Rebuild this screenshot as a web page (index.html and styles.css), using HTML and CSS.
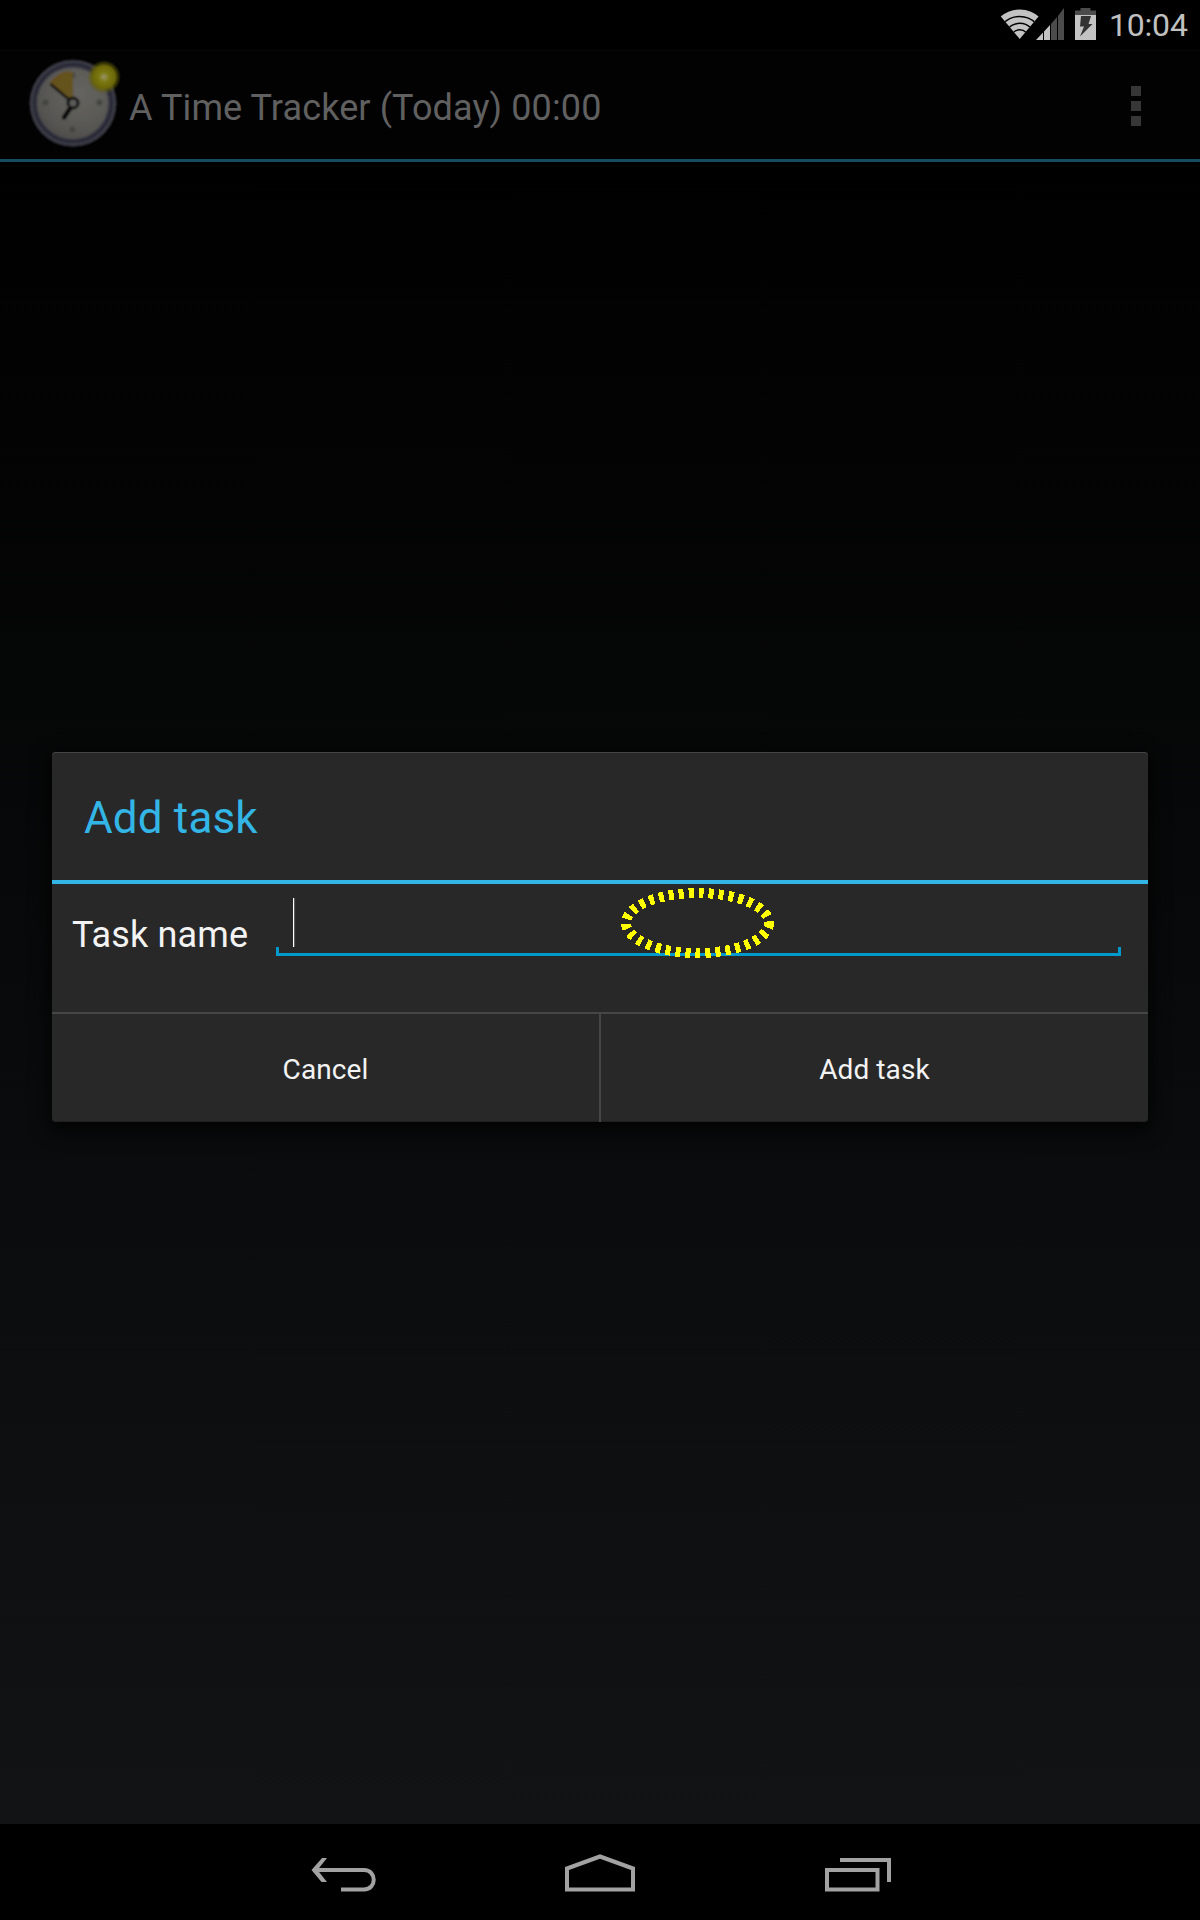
FILE: index.html
```html
<!DOCTYPE html>
<html lang="en">
<head>
<meta charset="utf-8">
<title>A Time Tracker</title>
<link rel="stylesheet" href="styles.css">
</head>
<body>
<div class="screen">
  <div class="status-bar">
    <svg class="status-icons" width="100" height="36" viewBox="1000 6 100 36">
      <defs><clipPath id="fan"><path d="M1019.7 39L1000 15.5V6H1039.4V15.5Z"/></clipPath></defs>
      <g clip-path="url(#fan)">
        <circle cx="1019.7" cy="39" r="29.5" fill="#c3c3c3"/>
        <g fill="none" stroke="#000" stroke-width="1.5">
          <circle cx="1019.7" cy="39" r="22.6"/><circle cx="1019.7" cy="39" r="15.7"/><circle cx="1019.7" cy="39" r="9.2"/>
        </g>
      </g>
      <path d="M1036 40L1043 32.5V40Z M1044 31.5L1050 25V40H1044Z" fill="#c3c3c3"/>
      <path d="M1051 24L1057 17V40H1051Z M1058 16L1064 8V40H1058Z" fill="#4b4b4b"/>
      <path d="M1075 15V10.500H1080.500V8H1090.500V10.500H1096V15Z" fill="#4b4b4b"/>
      <path d="M1075 15H1096V40H1075Z" fill="#c3c3c3"/>
      <path d="M1081 16H1091L1088.500 24H1092.500L1080 36.500L1084 26.500H1080Z" fill="#333"/>
    </svg>
    <span class="clock">10:04</span>
  </div>
  <header class="action-bar">
    <svg class="app-icon" width="96" height="96" viewBox="26 55 96 96">
      <defs>
        <radialGradient id="face" cx=".6" cy=".35" r=".75"><stop offset="0" stop-color="#656460"/><stop offset=".6" stop-color="#5a5955"/><stop offset="1" stop-color="#4b4a48"/></radialGradient>
        <radialGradient id="spark"><stop offset="0" stop-color="#949466"/><stop offset=".3" stop-color="#7c7912"/><stop offset=".65" stop-color="#6a6608"/><stop offset="1" stop-color="#5a5604" stop-opacity="0"/></radialGradient>
        <linearGradient id="wedge" x1="0" y1="0" x2="1" y2="1"><stop offset="0" stop-color="#66501a"/><stop offset="1" stop-color="#655522"/></linearGradient>
        <filter id="soft"><feGaussianBlur stdDeviation=".8"/></filter>
      </defs>
      <g filter="url(#soft)">
        <circle cx="73" cy="104" r="44" fill="#08080a"/>
        <circle cx="73" cy="103" r="43" fill="#40404b"/>
        <circle cx="73" cy="103" r="38.500" fill="none" stroke="#2b2a37" stroke-width="4"/>
        <circle cx="72.500" cy="103.500" r="35.500" fill="url(#face)"/>
        <g fill="#444441"><circle cx="72.500" cy="75.500" r="3"/><circle cx="45.500" cy="102.500" r="3"/><circle cx="99.500" cy="102.500" r="3"/><circle cx="72.500" cy="129.500" r="3"/></g>
        <path d="M73 103L50 84Q59 72 73 72Z" fill="url(#wedge)"/>
        <path d="M50 84Q59 72 70 72" fill="none" stroke="#6a4e08" stroke-width="1.500"/>
        <path d="M73 103L50.500 84" stroke="#080808" stroke-width="2.500"/>
        <path d="M71 107L64 117.500" stroke="#060606" stroke-width="4.500" stroke-linecap="round"/>
        <circle cx="73" cy="103" r="5" fill="#5b5b59" stroke="#0a0a0a" stroke-width="3"/>
      </g>
      <circle cx="104" cy="77" r="17" fill="url(#spark)"/>
    </svg>
    <h1 class="app-title">A Time Tracker (Today) 00:00</h1>
    <div class="overflow"><i></i><i></i><i></i></div>
  </header>
  <main class="content">
    <section class="dialog">
      <h2 class="dialog-title"><span>Add task</span></h2>
      <div class="form-row">
        <label class="field-label">Task name</label>
        <div class="field"><span class="caret"></span></div>
        <svg class="highlight" width="160" height="76" viewBox="617 885 160 76">
          <ellipse cx="697.500" cy="923" rx="71.500" ry="30" fill="none" stroke="#ff0" stroke-width="10" stroke-dasharray="5 5" shape-rendering="crispEdges"/>
        </svg>
      </div>
      <div class="buttons">
        <div class="button cancel"><span>Cancel</span></div>
        <div class="button add"><span>Add task</span></div>
      </div>
    </section>
  </main>
  <nav class="nav-bar">
    <svg width="72" height="96" viewBox="308 1824 72 96"><path d="M341 1889.500H364C377 1889.500 377 1870 364 1870H315" fill="none" stroke="#a2a2a2" stroke-width="4"/><path d="M322 1858H327L317.500 1870L327 1882H321.500L311.500 1870Z" fill="#a2a2a2"/></svg>
    <svg width="72" height="96" viewBox="564 1824 72 96"><path d="M567 1889.500V1868.500L600 1856.500L633 1868.500V1889.500Z" fill="none" stroke="#a2a2a2" stroke-width="4"/></svg>
    <svg width="72" height="96" viewBox="822 1824 72 96"><path d="M827 1870H877.500V1889.500H827Z M840 1860H889V1882" fill="none" stroke="#a2a2a2" stroke-width="4"/></svg>
  </nav>
</div>
</body>
</html>
```
FILE: styles.css
```css
* { box-sizing: border-box; }
body { margin: 0; background: #000; font-family: Roboto, "Noto Sans", sans-serif; }
h1, h2 { margin: 0; font-weight: 400; }
svg { display: block; flex: none; }
.screen {
  width: 1200px;
  height: 1920px;
  display: flex;
  flex-direction: column;
  background: linear-gradient(#000 160px, #111315 1824px);
}
.status-bar {
  height: 50px;
  display: flex;
  align-items: flex-start;
  padding: 6px 0 0 1000px;
  gap: 9px;
  background: #000;
}
.clock { color: #c0c0c0; font-size: 32px; line-height: 39px; letter-spacing: -.2px; white-space: nowrap; }
.action-bar {
  height: 112px;
  display: flex;
  align-items: flex-start;
  padding: 4px 58px 0 26px;
  border-top: 1px solid #070707;
  border-bottom: 3px solid #184c60;
  background: #020202;
}
.app-title { flex: 1; padding: 29px 0 0 7px; color: #606060; font-size: 36px; line-height: 48px; letter-spacing: .11px; white-space: nowrap; }
.overflow { display: flex; flex-direction: column; gap: 5px; margin: 31px 1px 0 0; }
.overflow i { width: 10px; height: 10px; background: #363636; }
.content { flex: 1; padding: 590px 52px 0; }
.dialog {
  height: 370px;
  display: flex;
  flex-direction: column;
  border-radius: 4px;
  background: #282828;
  box-shadow: 0 6px 18px 4px rgba(0, 0, 0, .7), inset 0 1px #454545, inset 0 -1px #202020;
}
.dialog-title {
  height: 132px;
  padding: 38px 32px 0;
  border-bottom: 4px solid #33b5e5;
  color: #33b5e5;
  font-size: 44px;
  line-height: 56px;
  letter-spacing: .15px;
}
.form-row { position: relative; height: 128px; display: flex; padding: 14px 27px 0 20px; }
.field-label { width: 204px; padding-top: 13px; color: #f3f3f3; font-size: 36px; line-height: 48px; letter-spacing: .13px; }
.field {
  flex: 1;
  height: 58px;
  padding-left: 17px;
  background:
    linear-gradient(#0099cc, #0099cc) left bottom / 100% 3px no-repeat,
    linear-gradient(#0099cc, #0099cc) left bottom / 3px 9px no-repeat,
    linear-gradient(#0099cc, #0099cc) right bottom / 3px 9px no-repeat;
}
.caret { display: block; width: 1px; height: 49px; background: #fff; box-shadow: 1px 0 1px #666; }
.highlight { position: absolute; left: 565px; top: 1px; }
.buttons { flex: 1; display: flex; border-top: 2px solid #464646; }
.button { flex: 1; display: flex; justify-content: center; padding-top: 38px; color: #f3f3f3; font-size: 28px; line-height: 36px; letter-spacing: .1px; }
.cancel { flex: 0 0 549px; border-right: 2px solid #464646; }
.nav-bar { height: 96px; display: flex; padding-left: 308px; gap: 184px; background: #000; }
.nav-bar svg:last-child { margin-left: 2px; }
```
